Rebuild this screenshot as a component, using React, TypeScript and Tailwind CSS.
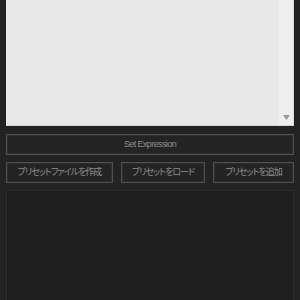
const FONT = "font-['Liberation_Sans','Noto_Sans_CJK_JP',sans-serif]";

function Btn({ label, className = "" }: { label: string; className?: string }) {
  return (
    <button
      className={`h-[21px] border border-[#505050] bg-[#242424] shadow-[inset_0_0_0_1px_#2e2e2e] text-[9px] leading-none text-[#8e8e8e] whitespace-nowrap [font-feature-settings:'palt'] flex items-center justify-center ${className}`}
    >
      {label}
    </button>
  );
}

export default function App() {
  return (
    <div className={`w-[300px] h-[300px] overflow-hidden bg-[#232323] ${FONT}`}>
      <div className="px-[6px] flex flex-col">
        {/* expression textarea */}
        <div className="h-[126px] flex bg-[#e8e8e8] border-r border-b border-[#d8d8d8]">
          <div className="flex-1" />
          <div className="w-[14px] bg-[#efefef] flex flex-col justify-end items-center pb-[5px]">
            <svg width="7" height="5" viewBox="0 0 7 5">
              <path d="M0 0 H7 L3.5 5 Z" fill="#9a9a9a" />
            </svg>
          </div>
        </div>

        <Btn label="Set Expression" className="mt-[8px] w-full tracking-[-0.6px]" />

        <div className="mt-[7px] flex gap-[8px]">
          <Btn label="プリセットファイルを作成" className="w-[107px] tracking-[-1px]" />
          <Btn label="プリセットをロード" className="w-[84px] tracking-[-1px]" />
          <Btn label="プリセットを追加" className="flex-1 tracking-[-1px]" />
        </div>

        <div className="mt-[7px] h-[120px] bg-[#1e1e1e] border border-[#2c2c2c]" />
      </div>
    </div>
  );
}
